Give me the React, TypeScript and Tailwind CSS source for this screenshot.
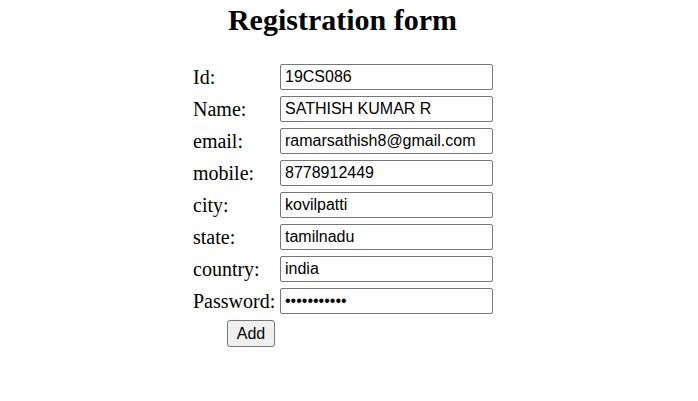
import React from "react";

const fields: { label: string; value: string; type?: string }[] = [
  { label: "Id:", value: "19CS086" },
  { label: "Name:", value: "SATHISH KUMAR R" },
  { label: "email:", value: "ramarsathish8@gmail.com" },
  { label: "mobile:", value: "8778912449" },
  { label: "city:", value: "kovilpatti" },
  { label: "state:", value: "tamilnadu" },
  { label: "country:", value: "india" },
  { label: "Password:", value: "sathish1234", type: "password" },
];

export default function App() {
  return (
    <div className="w-[698px] h-[401px] bg-white text-black overflow-hidden">
      <div className="w-[685px] flex flex-col items-center">
        <h2
          className="mt-[3px] text-[30px] leading-[34px] font-bold"
          style={{ fontFamily: '"Liberation Serif", "Times New Roman", serif' }}
        >
          Registration form
        </h2>
        <div
          className="mt-[27px] grid grid-cols-[88px_213px] auto-rows-[26px] gap-y-[6px]"
          style={{ fontFamily: '"Liberation Serif", "Times New Roman", serif' }}
        >
          {fields.map((f) => (
            <React.Fragment key={f.label}>
              <div className="flex items-center pl-[1px] text-[20px] leading-[23px] whitespace-nowrap">
                {f.label}
              </div>
              <input
                type={f.type ?? "text"}
                defaultValue={f.value}
                readOnly
                className="w-[213px] h-[26px] border border-[#767676] rounded-[2px] pl-[4px] pr-[2px] text-[16px] text-black outline-none bg-white"
                style={{ fontFamily: '"Liberation Sans", Arial, sans-serif' }}
              />
            </React.Fragment>
          ))}
          <div className="flex justify-end pr-[5px] h-[27px]">
            <button
              className="w-[48px] h-[27px] border border-[#767676] rounded-[3px] bg-[#efefef] text-[16px] text-black leading-none flex items-center justify-center"
              style={{ fontFamily: '"Liberation Sans", Arial, sans-serif' }}
            >
              Add
            </button>
          </div>
          <div />
        </div>
      </div>
    </div>
  );
}
